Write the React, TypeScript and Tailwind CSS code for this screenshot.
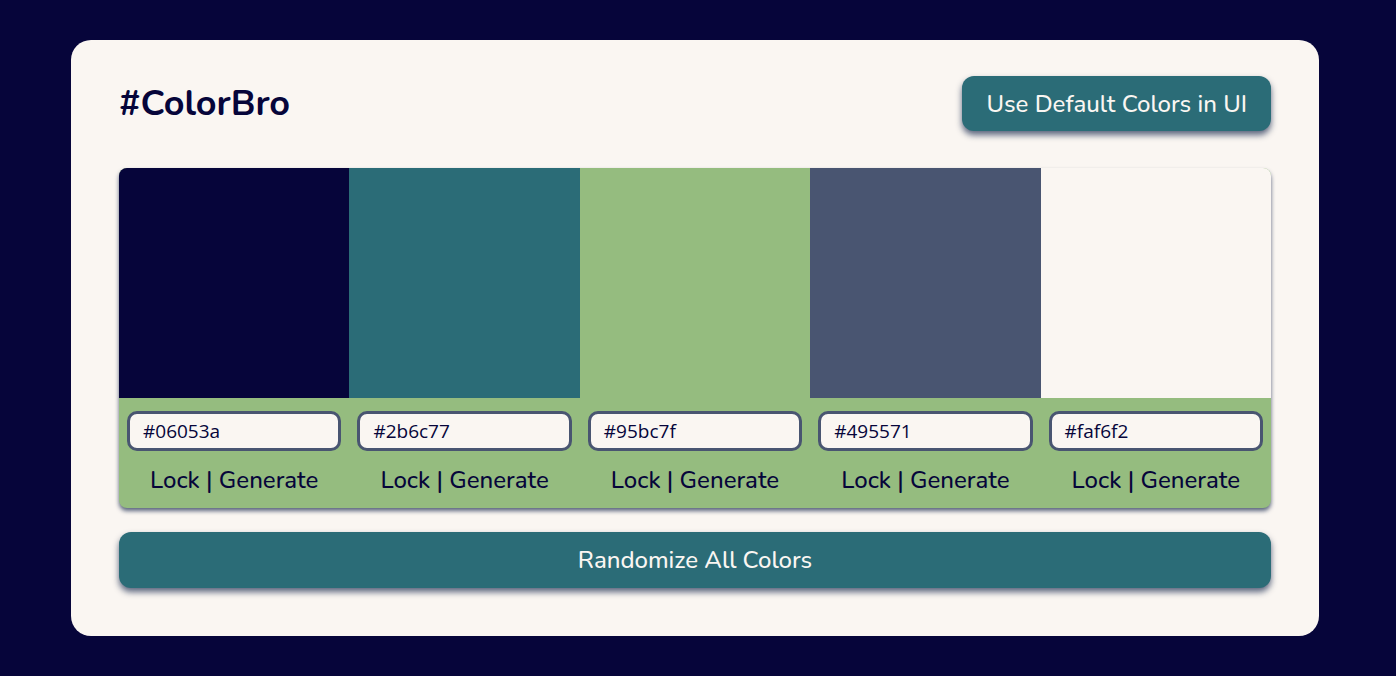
import React from "react";

const colors = ["#06053a", "#2b6c77", "#95bc7f", "#495571", "#faf6f2"];

export default function App() {
  return (
    <div
      className="min-h-screen w-full bg-[#06053a] pt-[40px] pl-[71px] pb-[40px]"
      style={{ fontFamily: "Nunito, Lato, 'Noto Sans', sans-serif" }}
    >
      <div className="w-[1248px] bg-[#faf6f2] rounded-[20px] px-[48px] pt-[36px] pb-[48px] flex flex-col">
        <div className="flex items-center justify-between h-[55px]">
          <h1 className="text-[36px] font-bold text-[#06053a] leading-none">#ColorBro</h1>
          <button className="h-[55px] px-[24px] rounded-[12px] bg-[#2b6c77] text-[#faf6f2] text-[24px] font-medium shadow-[0_4px_6px_rgba(73,85,113,0.9)]">
            Use Default Colors in UI
          </button>
        </div>
        <div className="mt-[37px] rounded-[8px] overflow-hidden bg-[#95bc7f] shadow-[0_3px_4px_rgba(73,85,113,0.9)]">
          <div className="grid grid-cols-5">
            {colors.map((c) => (
              <div key={c} className="flex flex-col">
                <div className="h-[230px]" style={{ backgroundColor: c }} />
                <div className="h-[110px] flex flex-col items-center pt-[13px] px-[8px]">
                  <div className="w-full h-[40px] shrink-0 rounded-[10px] border-[3px] border-[#495571] bg-[#faf6f2] flex items-center pl-[13px] text-[19px] text-[#06053a]" style={{ fontFamily: "'Open Sans', 'Noto Sans', sans-serif" }}>
                    {c}
                  </div>
                  <div className="flex-1 flex items-center text-[24px] font-medium text-[#06053a] leading-none">Lock | Generate</div>
                </div>
              </div>
            ))}
          </div>
        </div>
        <button className="mt-[24px] h-[56px] w-full rounded-[12px] bg-[#2b6c77] text-[#faf6f2] text-[24px] font-medium shadow-[0_4px_6px_rgba(73,85,113,0.9)]">
          Randomize All Colors
        </button>
      </div>
    </div>
  );
}
